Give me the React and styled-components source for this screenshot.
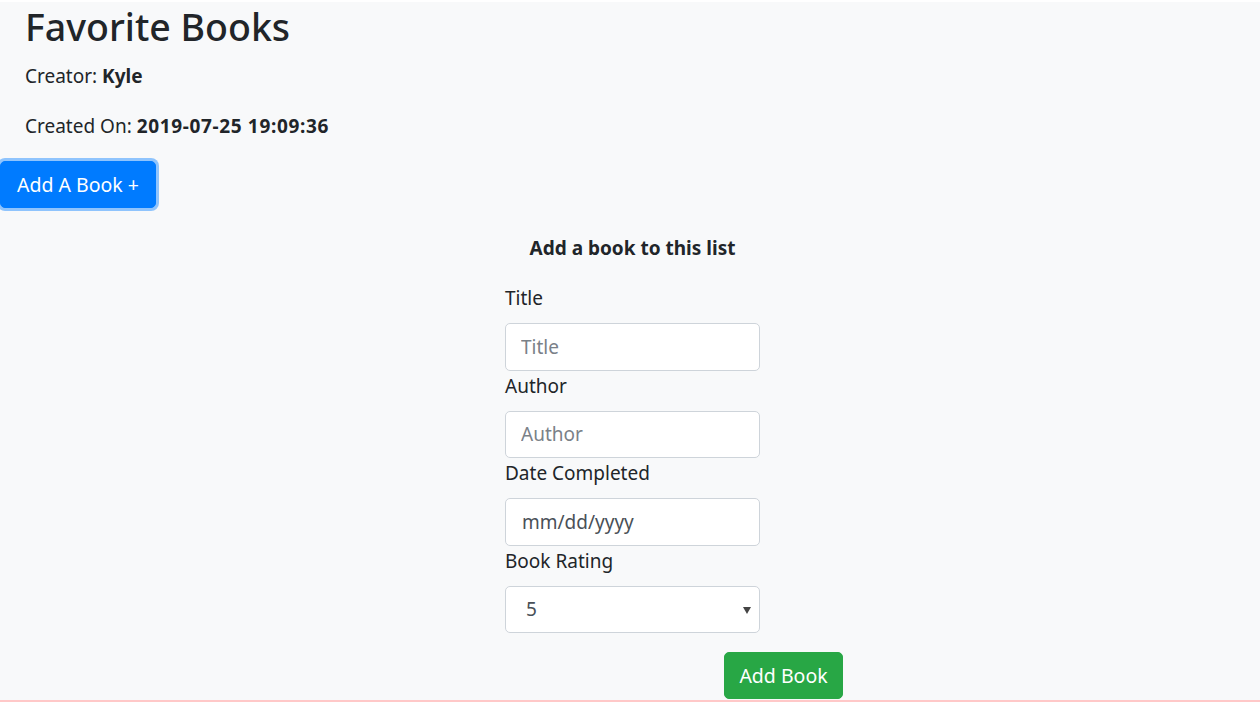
import React from "react";
import styled, { createGlobalStyle } from "styled-components";

const GlobalStyle = createGlobalStyle`
  html, body { margin: 0; padding: 0; background: #ffffff; }
  body {
    font-family: "Noto Sans", "Open Sans", "Liberation Sans", sans-serif;
    color: #212529;
    font-size: 20px;
    line-height: 1.5;
  }
  * { box-sizing: border-box; }
`;

const Page = styled.div`
  display: flow-root;
  margin-top: 2px;
  height: 700px;
  background: #f8f9fa;
  border-bottom: 2px solid #ffc8c8;
`;

const Header = styled.header`
  padding-left: 25px;
`;

const Title = styled.h1`
  margin: 0 0 9px;
  font-size: 37.5px;
  font-weight: 500;
  line-height: 50px;
  white-space: nowrap;
`;

const Meta = styled.p`
  margin: 0 0 20px;
  font-size: 19px;
  line-height: 30px;
`;

const Strong = styled.strong`
  font-weight: 700;
  letter-spacing: ${(p) => p.$spacing || "0"};
`;

const Button = styled.button`
  flex-shrink: 0;
  white-space: nowrap;
  font-family: inherit;
  font-size: 19.5px;
  line-height: 30px;
  height: 47px;
  padding: 7px 0;
  text-align: center;
  border: 1px solid ${(p) => p.$bg};
  border-radius: 5px;
  background: ${(p) => p.$bg};
  color: #ffffff;
  cursor: pointer;
  box-shadow: ${(p) => (p.$focused ? "0 0 0 3px rgba(38, 143, 255, 0.5)" : "none")};
  width: ${(p) => p.$width};
`;

const FormSection = styled.section`
  display: flex;
  flex-direction: column;
  align-items: center;
  padding-left: 5px;
  margin-top: 25px;
`;

const FormTitle = styled.h5`
  margin: 0 0 20px;
  font-size: 19px;
  font-weight: 700;
  line-height: 30px;
`;

const Form = styled.form`
  width: 255px;
  display: flex;
  flex-direction: column;
`;

const Label = styled.label`
  display: block;
  font-size: 19px;
  line-height: 30px;
  margin-bottom: 10px;
`;

const Input = styled.input`
  display: block;
  width: 100%;
  height: 47.5px;
  padding: 7px 15px;
  font-family: inherit;
  font-size: 19px;
  color: #495057;
  background: #ffffff;
  border: 1px solid #ced4da;
  border-radius: 5px;
  outline: none;
  &::placeholder { color: #7a8188; opacity: 1; }
`;

const DateText = styled.div`
  display: flex;
  align-items: center;
  width: 100%;
  height: 47.5px;
  padding: 7px 16px;
  font-size: 19px;
  color: #495057;
  background: #ffffff;
  border: 1px solid #ced4da;
  border-radius: 5px;
`;

const SelectWrap = styled.div`
  position: relative;
  width: 100%;
`;

const Select = styled.select`
  display: block;
  width: 100%;
  height: 47.5px;
  padding: 7px 20px;
  font-family: inherit;
  font-size: 19px;
  color: #495057;
  background: #ffffff;
  border: 1px solid #ced4da;
  border-radius: 5px;
  appearance: none;
  -webkit-appearance: none;
  outline: none;
`;

const Caret = styled.span`
  position: absolute;
  right: 9px;
  top: 21px;
  width: 0;
  height: 0;
  border-left: 4px solid transparent;
  border-right: 4px solid transparent;
  border-top: 7px solid #444;
  pointer-events: none;
`;

const SubmitRow = styled.div`
  display: flex;
  padding-left: 219px;
  margin-top: 19px;
`;

export default function App() {
  return (
    <>
      <GlobalStyle />
      <Page>
        <Header>
          <Title>Favorite Books</Title>
          <Meta>
            Creator: <Strong>Kyle</Strong>
          </Meta>
          <Meta>
            Created On: <Strong $spacing="0.65px">2019-07-25 19:09:36</Strong>
          </Meta>
        </Header>
        <Button type="button" $bg="#007bff" $focused $width="156px">
          Add A Book +
        </Button>
        <FormSection>
          <FormTitle>Add a book to this list</FormTitle>
          <Form onSubmit={(e) => e.preventDefault()}>
            <Label htmlFor="title">Title</Label>
            <Input id="title" placeholder="Title" />
            <Label htmlFor="author">Author</Label>
            <Input id="author" placeholder="Author" />
            <Label htmlFor="date">Date Completed</Label>
            <DateText id="date">mm/dd/yyyy</DateText>
            <Label htmlFor="rating">Book Rating</Label>
            <SelectWrap>
              <Select id="rating" defaultValue="5">
                <option value="1">1</option>
                <option value="2">2</option>
                <option value="3">3</option>
                <option value="4">4</option>
                <option value="5">5</option>
              </Select>
              <Caret />
            </SelectWrap>
            <SubmitRow>
              <Button type="submit" $bg="#28a745" $width="119px">
                Add Book
              </Button>
            </SubmitRow>
          </Form>
        </FormSection>
      </Page>
    </>
  );
}
